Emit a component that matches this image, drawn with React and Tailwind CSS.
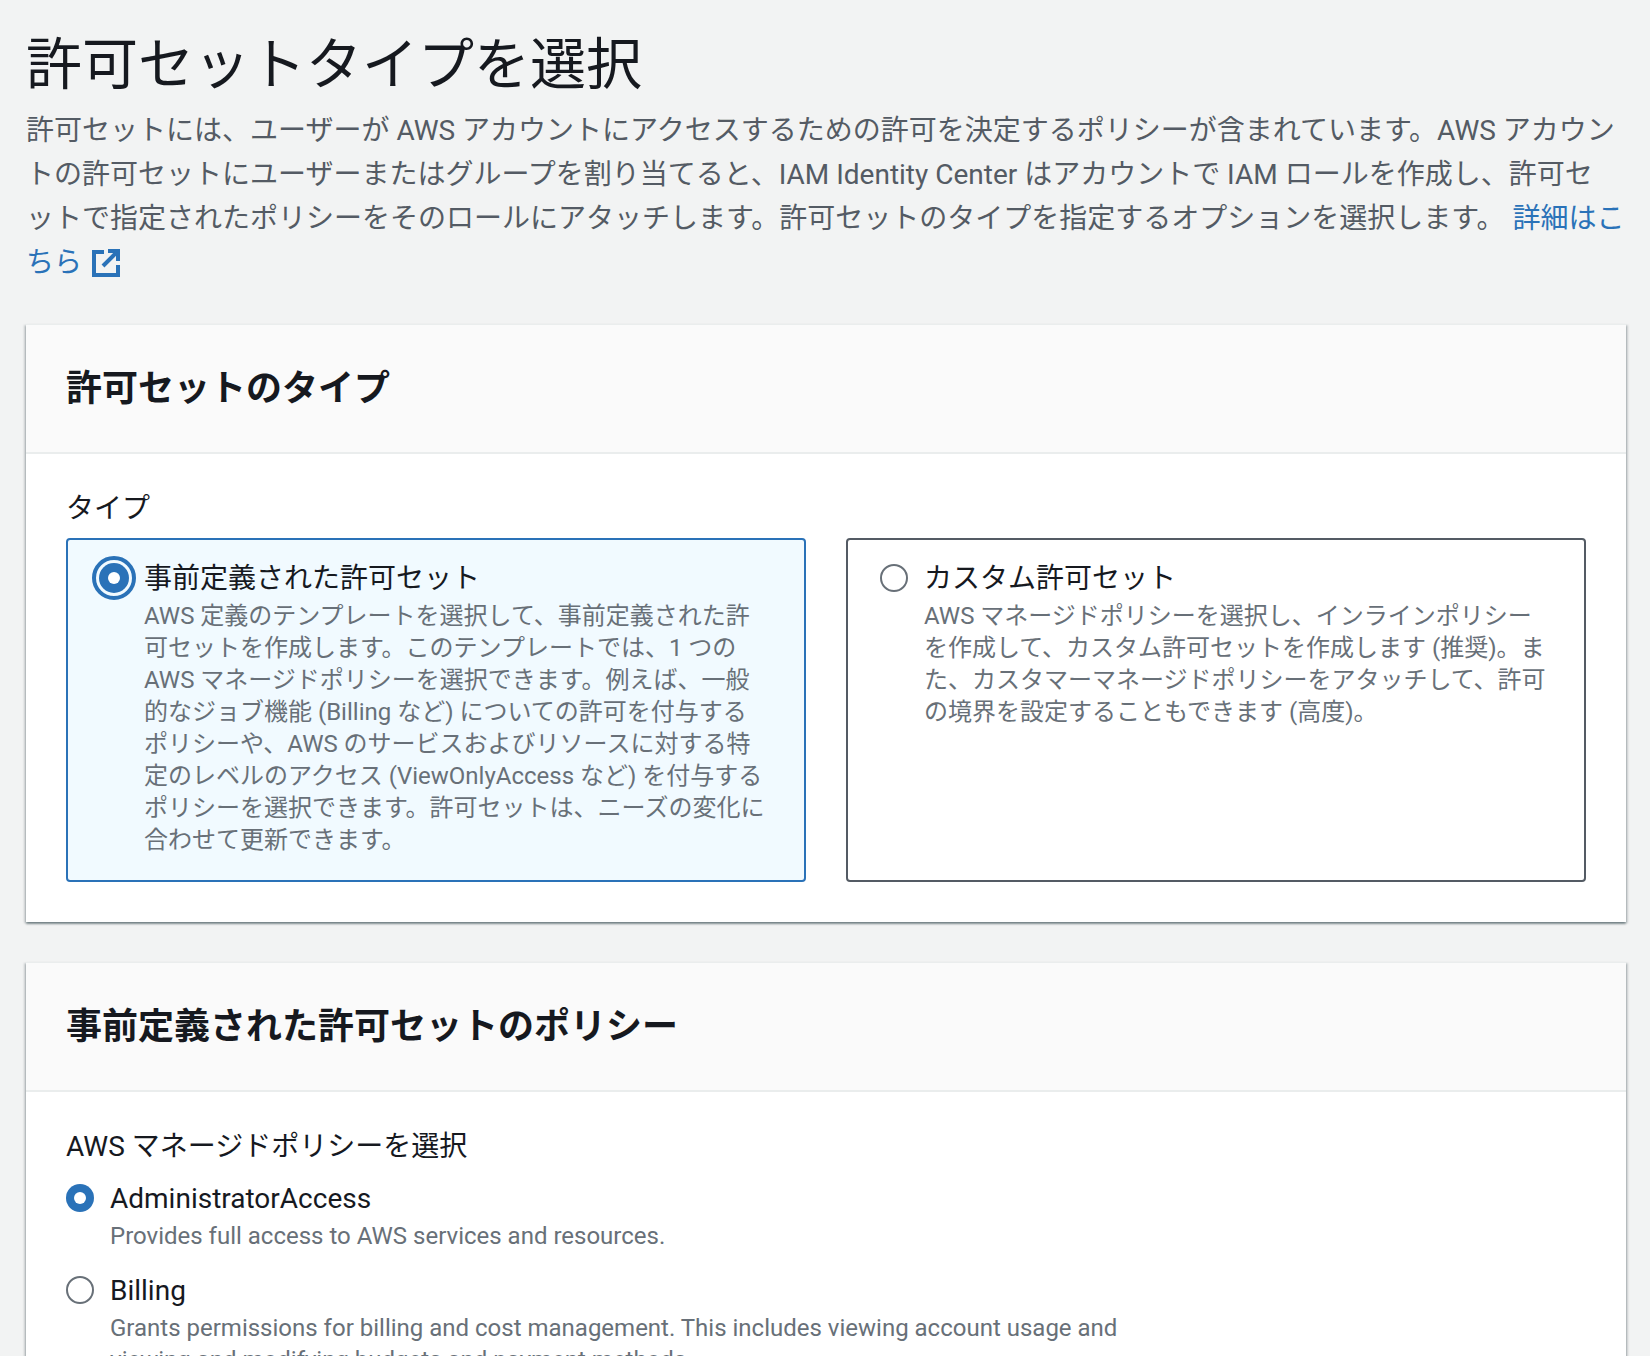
import { Fragment } from "react";

const typeCards = [
  {
    title: "事前定義された許可セット",
    selected: true,
    lines: [
      "AWS 定義のテンプレートを選択して、事前定義された許",
      "可セットを作成します。このテンプレートでは、1 つの",
      "AWS マネージドポリシーを選択できます。例えば、一般",
      "的なジョブ機能 (Billing など) についての許可を付与する",
      "ポリシーや、AWS のサービスおよびリソースに対する特",
      "定のレベルのアクセス (ViewOnlyAccess など) を付与する",
      "ポリシーを選択できます。許可セットは、ニーズの変化に",
      "合わせて更新できます。",
    ],
  },
  {
    title: "カスタム許可セット",
    selected: false,
    lines: [
      "AWS マネージドポリシーを選択し、インラインポリシー",
      "を作成して、カスタム許可セットを作成します (推奨)。ま",
      "た、カスタマーマネージドポリシーをアタッチして、許可",
      "の境界を設定することもできます (高度)。",
    ],
  },
];

const Lines = ({ lines }) =>
  lines.map((line, i) => (
    <Fragment key={i}>
      {line}
      {i < lines.length - 1 && <br />}
    </Fragment>
  ));

const ExternalIcon = () => (
  <svg viewBox="0 0 28 28" className="inline-block w-7 h-7 ml-[10px] align-[-5px]" fill="none" stroke="#2a72b8" strokeWidth="4">
    <path d="M12 3H2v23h24V16" />
    <path d="M16 2h10v10" />
    <path d="M25 3L11 17" />
  </svg>
);

const Card = ({ title, children }) => (
  <section className="bg-white border-t border-[#eaeded] shadow-[0_2px_2px_0_rgba(0,28,36,0.4),2px_1px_2px_0_rgba(0,28,36,0.15),-2px_1px_2px_0_rgba(0,28,36,0.15)]">
    <div className="h-[129px] bg-[#fafafa] border-b-2 border-[#eaeded] px-10 flex items-center">
      <h2 className="text-[36px] leading-[48px] font-bold text-[#16191f]">{title}</h2>
    </div>
    <div className="px-10 pt-[33px] pb-10">{children}</div>
  </section>
);

export default function App() {
  return (
    <div className="h-[1356px] overflow-hidden bg-[#f2f3f3] pl-[26px] pr-6 pt-[31px] font-['Roboto','Noto_Sans_CJK_JP',sans-serif]">
      <h1 className="text-[56px] leading-[68px] text-[#16191f]">許可セットタイプを選択</h1>
      <p className="mt-[10px] text-[28px] leading-[44px] text-[#545b64] whitespace-nowrap">
        許可セットには、ユーザーが AWS アカウントにアクセスするための許可を決定するポリシーが含まれています。AWS アカウン
        <br />
        トの許可セットにユーザーまたはグループを割り当てると、IAM Identity Center はアカウントで IAM ロールを作成し、許可セ
        <br />
        ットで指定されたポリシーをそのロールにアタッチします。許可セットのタイプを指定するオプションを選択します。
        <a className="ml-2 text-[#2a72b8]">詳細はこ</a>
        <br />
        <a className="text-[#2a72b8]">
          ちら
          <ExternalIcon />
        </a>
      </p>

      <div className="mt-[39px] flex flex-col gap-10">
        <Card title="許可セットのタイプ">
          <div className="text-[28px] leading-[44px] text-[#16191f]">タイプ</div>
          <div className="grid grid-cols-2 gap-10 mt-[7px]">
            {typeCards.map((card) => (
              <div
                key={card.title}
                className={`h-[344px] rounded border-2 pl-[24px] pt-[16px] flex gap-[8px] ${
                  card.selected ? "bg-[#f1faff] border-[#2a72b8]" : "bg-white border-[#545b64]"
                }`}
              >
                {card.selected ? (
                  <span className="shrink-0 w-[44px] h-[44px] rounded-full border-[4px] border-[#2a72b8] flex items-center justify-center">
                    <span className="w-[30px] h-[30px] rounded-full bg-[#2a72b8] flex items-center justify-center">
                      <span className="w-[12px] h-[12px] rounded-full bg-white" />
                    </span>
                  </span>
                ) : (
                  <span className="shrink-0 w-[28px] h-[28px] m-2 rounded-full border-2 border-[#687078] bg-white" />
                )}
                <div className="whitespace-nowrap pt-[2px]">
                  <div className="text-[28px] leading-[42px] text-[#16191f]">{card.title}</div>
                  <div className="text-[24px] leading-[32px] text-[#687078]">
                    <Lines lines={card.lines} />
                  </div>
                </div>
              </div>
            ))}
          </div>
        </Card>

        <Card title="事前定義された許可セットのポリシー">
          <div className="text-[28px] leading-[44px] text-[#16191f]">AWS マネージドポリシーを選択</div>
          <div className="mt-[9px] flex gap-4">
            <span className="shrink-0 w-7 h-7 mt-[6px] rounded-full bg-[#2a72b8] flex items-center justify-center">
              <span className="w-[12px] h-[12px] rounded-full bg-white" />
            </span>
            <div>
              <div className="text-[28px] leading-[42px] text-[#16191f]">AdministratorAccess</div>
              <div className="text-[24px] leading-[32px] text-[#687078]">Provides full access to AWS services and resources.</div>
            </div>
          </div>
          <div className="mt-[18px] flex gap-4">
            <span className="shrink-0 w-7 h-7 mt-[6px] rounded-full border-2 border-[#687078] bg-white" />
            <div>
              <div className="text-[28px] leading-[42px] text-[#16191f]">Billing</div>
              <div className="text-[24px] leading-[32px] text-[#687078]">
                Grants permissions for billing and cost management. This includes viewing account usage and
                <br />
                viewing and modifying budgets and payment methods.
              </div>
            </div>
          </div>
        </Card>
      </div>
    </div>
  );
}
